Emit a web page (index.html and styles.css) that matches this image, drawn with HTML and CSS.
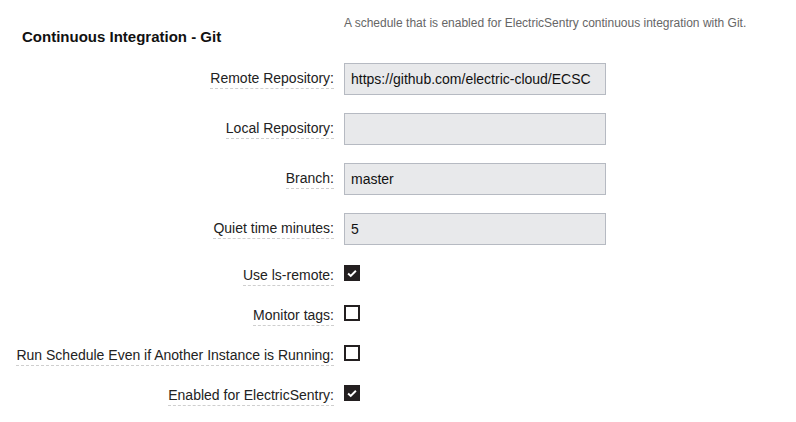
FILE: index.html
```html
<!DOCTYPE html>
<html>
<head>
<meta charset="utf-8">
<link rel="stylesheet" href="styles.css">
</head>
<body>
<div class="form">
  <div class="header">
    <div class="head-left"><h2 class="title">Continuous Integration - Git</h2></div>
    <div class="head-right"><p class="desc">A schedule that is enabled for ElectricSentry continuous integration with Git.</p></div>
  </div>

  <div class="row text-row">
    <div class="label"><span class="lbl">Remote Repository:</span></div>
    <div class="field">https://github.com/electric-cloud/ECSC</div>
  </div>
  <div class="row text-row">
    <div class="label"><span class="lbl">Local Repository:</span></div>
    <div class="field"></div>
  </div>
  <div class="row text-row">
    <div class="label"><span class="lbl">Branch:</span></div>
    <div class="field">master</div>
  </div>
  <div class="row text-row">
    <div class="label"><span class="lbl">Quiet time minutes:</span></div>
    <div class="field">5</div>
  </div>

  <div class="checks">
    <div class="row check-row">
      <div class="label"><span class="lbl">Use ls-remote:</span></div>
      <div class="box checked"><svg viewBox="0 0 16 16" width="13" height="13"><path d="M2.8 8 L6.3 11.2 L13.2 4.4" fill="none" stroke="#fff" stroke-width="2.6"/></svg></div>
    </div>
    <div class="row check-row">
      <div class="label"><span class="lbl">Monitor tags:</span></div>
      <div class="box"></div>
    </div>
    <div class="row check-row">
      <div class="label"><span class="lbl">Run Schedule Even if Another Instance is Running:</span></div>
      <div class="box"></div>
    </div>
    <div class="row check-row">
      <div class="label"><span class="lbl">Enabled for ElectricSentry:</span></div>
      <div class="box checked"><svg viewBox="0 0 16 16" width="13" height="13"><path d="M2.8 8 L6.3 11.2 L13.2 4.4" fill="none" stroke="#fff" stroke-width="2.6"/></svg></div>
    </div>
  </div>
</div>
</body>
</html>
```

FILE: styles.css
```css
html, body {
  margin: 0;
  padding: 0;
  background: #fff;
}
body {
  font-family: "Liberation Sans", Arial, sans-serif;
  color: #222;
  width: 796px;
  height: 422px;
  overflow: hidden;
}
.form {
  display: flex;
  flex-direction: column;
  gap: 18px;
}
.header {
  display: flex;
  margin-bottom: -1px;
}
.head-left {
  width: 334px;
  padding-left: 22px;
  box-sizing: border-box;
}
.title {
  margin: 28px 0 0 0;
  font-size: 15px;
  line-height: 18px;
  font-weight: bold;
  color: #111;
}
.head-right {
  margin-left: 10px;
}
.desc {
  margin: 15px 0 0 0;
  font-size: 12px;
  line-height: 16px;
  color: #666;
}
.row {
  display: flex;
}
.label {
  width: 334px;
  text-align: right;
  font-size: 14px;
  color: #222;
}
.lbl {
  display: inline-block;
  line-height: 17px;
  border-bottom: 1px dashed #cfcfcf;
  padding-bottom: 1px;
}
.text-row {
  align-items: center;
  height: 32px;
}
.text-row .label {
  padding-top: 1px;
}
.field {
  margin-left: 10px;
  width: 262px;
  height: 32px;
  box-sizing: border-box;
  border: 1px solid #b6bac2;
  background: #e8e9eb;
  font-size: 14px;
  line-height: 30px;
  padding: 0 6px;
  color: #111;
  white-space: nowrap;
  overflow: hidden;
}
.checks {
  display: flex;
  flex-direction: column;
  gap: 20px;
  margin-top: 2px;
}
.check-row {
  align-items: flex-start;
  height: 20px;
}
.check-row .lbl {
  line-height: 20px;
  padding-bottom: 0;
}
.box {
  margin-left: 10px;
  margin-top: 0;
  width: 16px;
  height: 16px;
  box-sizing: border-box;
  border: 2px solid #231f20;
  background: #fff;
  display: flex;
  align-items: center;
  justify-content: center;
}
.box.checked {
  background: #231f20;
}
.box svg {
  display: block;
}
```
